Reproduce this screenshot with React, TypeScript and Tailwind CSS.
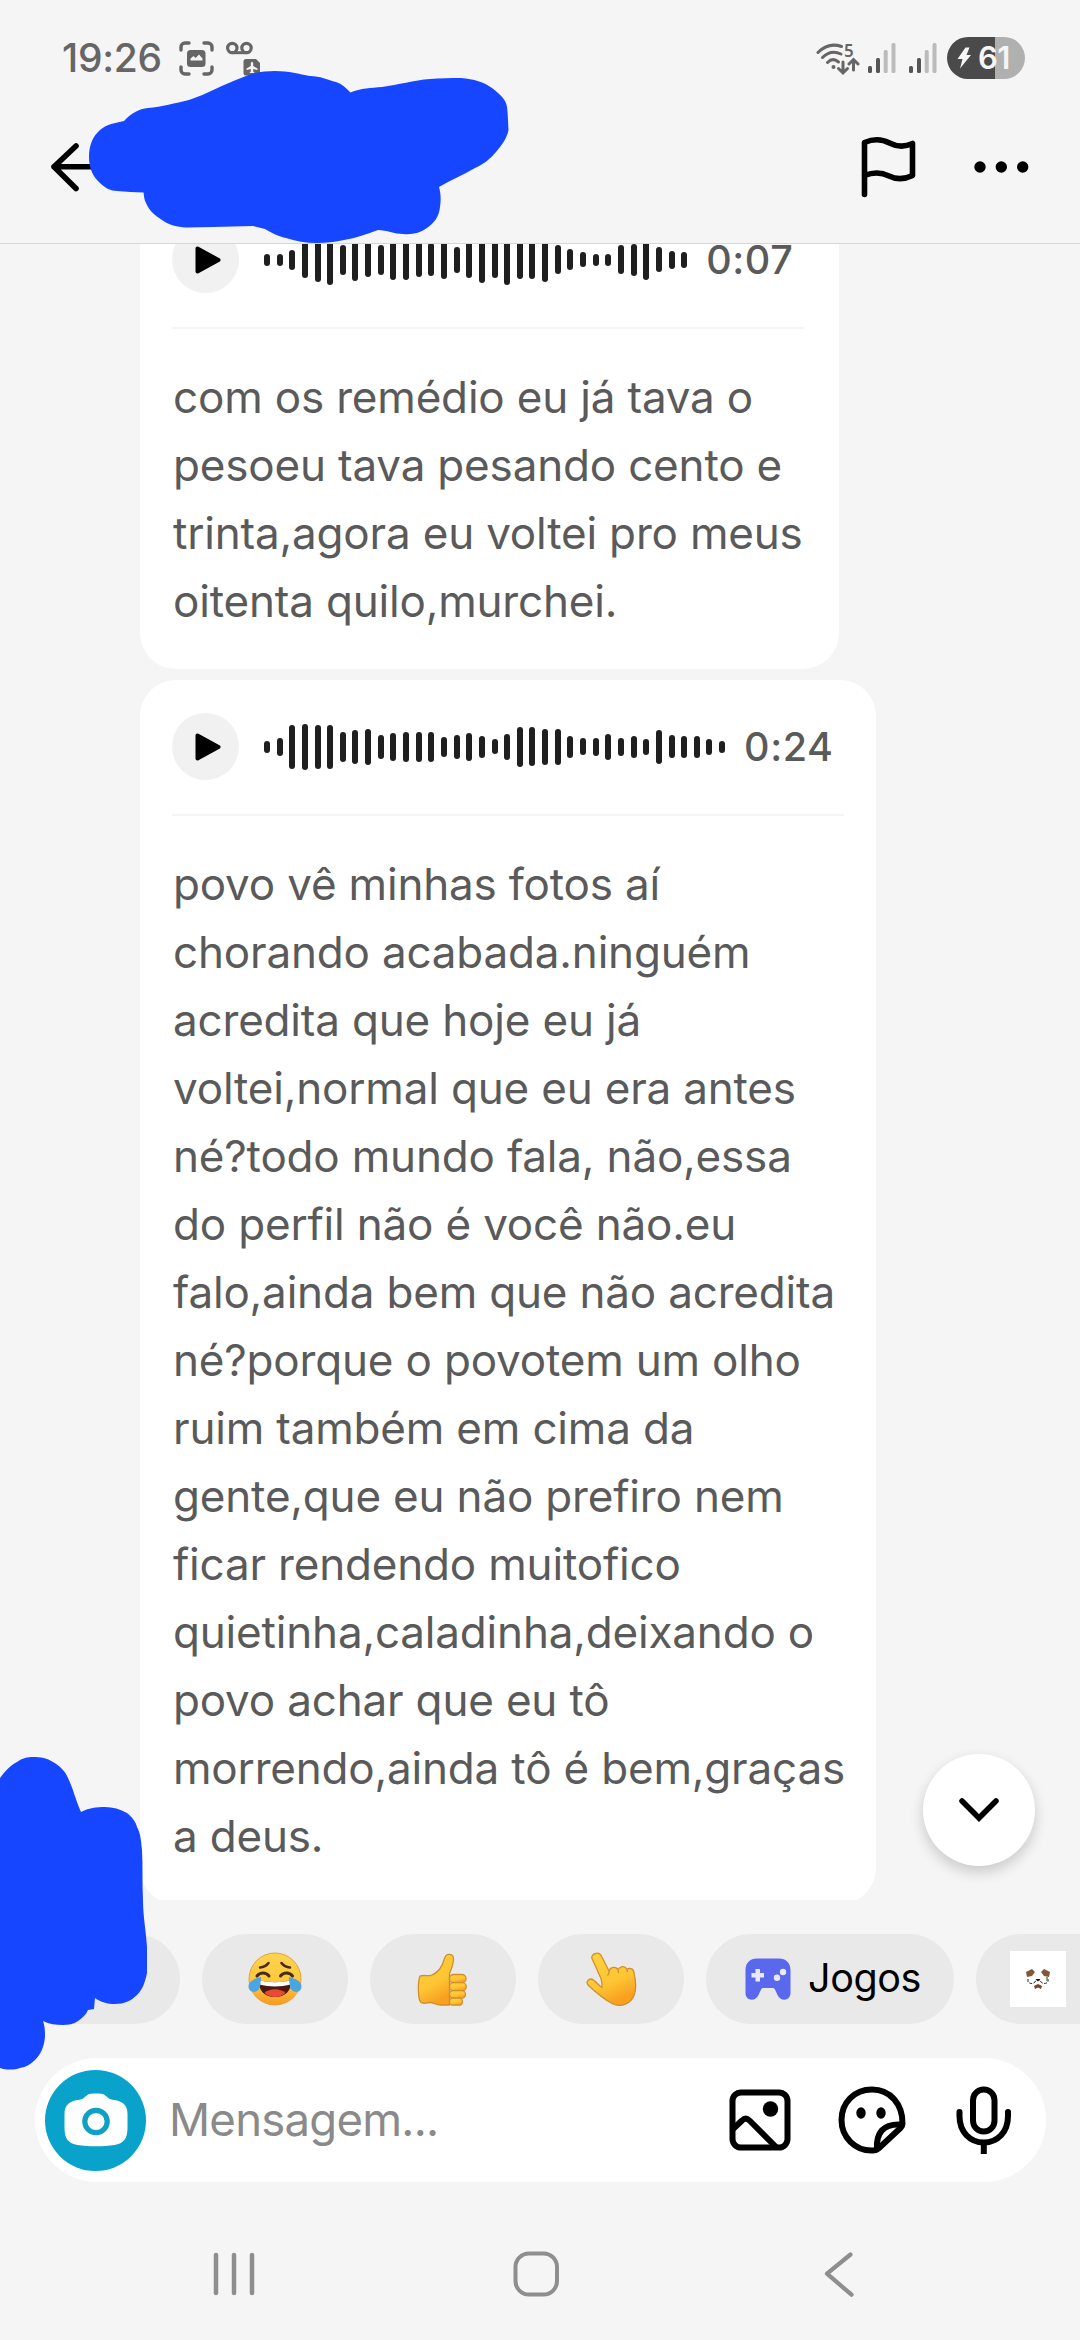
import React from 'react';

const firstWave = [
  12, 12, 20, 37, 45, 50, 30, 42, 35, 30, 40, 40, 35, 33, 39, 26, 37, 47, 37, 50, 38, 38, 45, 29, 21, 15, 12, 12, 29, 32,
  40, 25, 18, 16,
];

const secondWave = [
  12, 18, 44, 46, 44, 44, 30, 34, 36, 24, 28, 30, 30, 30, 20, 24, 28, 22, 15, 26, 40, 39, 36, 36, 22, 17, 18, 26, 18, 22,
  16, 34, 23, 22, 22, 16, 12,
];

const firstText = [
  'com os remédio eu já tava o',
  'pesoeu tava pesando cento e',
  'trinta,agora eu voltei pro meus',
  'oitenta quilo,murchei.',
];

const secondText = [
  'povo vê minhas fotos aí',
  'chorando acabada.ninguém',
  'acredita que hoje eu já',
  'voltei,normal que eu era antes',
  'né?todo mundo fala, não,essa',
  'do perfil não é você não.eu',
  'falo,ainda bem que não acredita',
  'né?porque o povotem um olho',
  'ruim também em cima da',
  'gente,que eu não prefiro nem',
  'ficar rendendo muitofico',
  'quietinha,caladinha,deixando o',
  'povo achar que eu tô',
  'morrendo,ainda tô é bem,graças',
  'a deus.',
];

function StatusBar() {
  return (
    <div className="flex h-[79px] items-end pl-[62px] pr-[55px]">
      <span className="h-[42px] w-[117px] text-[39px] font-medium leading-[42px] tracking-[-0.3px] text-[#666]">19:26</span>
      <svg className="mb-[3px] h-[35px] w-[35px]" viewBox="0 0 35 35" fill="none">
        <path
          d="M2 9V6a4 4 0 0 1 4-4h4M25 2h4a4 4 0 0 1 4 4v3M33 26v3a4 4 0 0 1-4 4h-4M10 33H6a4 4 0 0 1-4-4v-3"
          stroke="#666"
          strokeWidth="3.4"
          strokeLinecap="round"
        />
        <rect x="8" y="9" width="18.500" height="17" rx="3.500" fill="#666" />
        <path d="M11.500 19.500v-2l3-2.500 2 2 3.500-3.500 3.500 4v2z" fill="#f5f5f5" />
      </svg>
      <svg className="mb-[2px] ml-[12px] h-[36px] w-[36px]" viewBox="0 0 36 36" fill="none">
        <circle cx="6.300" cy="7" r="4.700" stroke="#666" strokeWidth="3.200" />
        <circle cx="20.500" cy="7" r="4.700" stroke="#666" strokeWidth="3.200" />
        <path d="M6.300 11.700h14.200" stroke="#666" strokeWidth="3" />
        <path d="M20 18h10l4 4v10a2.500 2.500 0 0 1-2.500 2.500h-11.500a2.500 2.500 0 0 1-2.500-2.500V20.500a2.500 2.500 0 0 1 2.500-2.500z" fill="#666" />
        <path d="M26 20.500l1.200 1.500v3l4.300 2.500v1.500l-4.300-1v2.500l1.500 1.500h-5.400l1.500-1.500V28l-4.300 1v-1.500l4.300-2.500v-3z" fill="#f5f5f5" />
      </svg>

      <div className="ml-auto flex items-end">
        <svg className="mb-[3px] h-[36px] w-[44px]" viewBox="0 0 44 36" fill="none">
          <g stroke="#666" strokeWidth="3" strokeLinecap="round">
            <path d="M2 12.500C9 5.500 17 3.500 25.500 6.500" />
            <path d="M6.500 17.500c5.500-5.500 12-6.500 18.500-3.500" />
            <path d="M11.500 22.500c3.500-3.500 7.500-3.500 11-.5" />
            <path d="M27 22v10M22.500 28.500l4.500 4.500 4.500-4.500M37.500 30V20M33 24l4.500-4.500 4.500 4.500" />
          </g>
          <circle cx="17.500" cy="27" r="2" fill="#666" />
          <text x="28" y="16.500" fontFamily="Noto Sans" fontSize="17" fontWeight="600" fill="#666">5</text>
        </svg>
        {[0, 1].map((i) => (
          <svg key={i} className="mb-[6px] ml-[8px] mr-[5px] h-[30px] w-[28px]" viewBox="0 0 28 30">
            <rect x="0" y="23" width="4" height="7" rx="1.500" fill="#555" />
            <rect x="8" y="15" width="4" height="15" rx="1.500" fill="#555" />
            <rect x="15.700" y="7" width="4" height="23" rx="1.500" fill="#bbb" />
            <rect x="23.500" y="0" width="4" height="30" rx="1.500" fill="#bbb" />
          </svg>
        ))}
        <div className="ml-[5px] flex h-[42px] w-[78px] items-center rounded-full bg-linear-to-r from-[#4a4a4a] from-[61%] to-[#b0b0b0] to-[61%] pl-[9px] text-[31px] font-semibold text-[#f5f5f5]">
          <svg className="h-[22px] w-[16px]" viewBox="0 0 16 22" fill="#f5f5f5">
            <path d="M9.500.5h4L10.500 8H15L4 21.500 6.500 12H1.500z" />
          </svg>
          <span className="ml-[6px] tracking-[-0.5px]">61</span>
        </div>
      </div>
    </div>
  );
}

function TopBar() {
  return (
    <header className="h-[244px] shrink-0 border-b border-[#d6d6d8]">
      <StatusBar />
      <div className="flex h-[164px] items-start justify-between pl-[50px] pr-[51px] pt-[56px]">
        <svg className="mt-[7px] h-[50px] w-[56px]" viewBox="0 0 56 50" fill="none" stroke="#000" strokeWidth="5.600" strokeLinecap="round" strokeLinejoin="round">
          <path d="M26 4 4 24.700 26 46.500M4 24.700h46" />
        </svg>
        <div className="flex items-start">
          <svg className="h-[66px] w-[58px]" viewBox="0 0 58 66" fill="none" stroke="#000" strokeWidth="5.600" strokeLinecap="round" strokeLinejoin="round">
            <path d="M5.500 59.500V7.500c9-3.800 16.500-4 25 .5 8 4.200 15 4.200 23 .5v32c-8.500 4.200-15.500 4.500-23.500.5-8-4-15.500-4-24.500-.5" />
          </svg>
          <svg className="ml-[57px] mt-[26px] h-[12px] w-[55px]" viewBox="0 0 55 12">
            <circle cx="6" cy="6" r="5.700" />
            <circle cx="27.300" cy="6" r="5.700" />
            <circle cx="48.700" cy="6" r="5.700" />
          </svg>
        </div>
      </div>
    </header>
  );
}

type VoiceProps = {
  bars: number[];
  time: string;
  lines: string[];
  className: string;
};

function VoiceMessage({ bars, time, lines, className }: VoiceProps) {
  return (
    <div className={'rounded-[36px] bg-white pb-[34px] pl-[32px] pt-[33px] ' + className}>
      <div className="flex h-[67px] items-center">
        <div className="flex size-[67px] items-center justify-center rounded-full bg-[#f2f1f2]">
          <svg className="ml-[4px] h-[28px] w-[26px]" viewBox="0 0 26 28">
            <path d="M2.500 2.500v23L23.500 14z" fill="#000" stroke="#000" strokeWidth="4" strokeLinejoin="round" />
          </svg>
        </div>
        <div className="ml-[25px] flex items-center gap-[6.650px]">
          {bars.map((height, i) => (
            <div key={i} className="w-[6px] rounded-full bg-[#1f1f1f]" style={{ height }} />
          ))}
        </div>
        <span className="ml-[19px] text-[39.500px] font-medium leading-[30px] tracking-[0.600px] text-[#5a5a5a]">{time}</span>
      </div>
      <div className="mt-[34px] h-[2px] bg-[#f5f5f5]" />
      <div className="ml-px mt-[34px] text-[44px] leading-[68px] tracking-[-0.180px] text-[#5a5a5a]">
        {lines.map((line) => (
          <p key={line} className="whitespace-nowrap">{line}</p>
        ))}
      </div>
    </div>
  );
}

function Laughing() {
  return (
    <svg className="size-[56px]" viewBox="0 0 56 56">
      <defs>
        <linearGradient id="face" x1="0" y1="0" x2="0" y2="1">
          <stop offset="0" stopColor="#fdd44f" />
          <stop offset="0.600" stopColor="#fcc63a" />
          <stop offset="1" stopColor="#f79a22" />
        </linearGradient>
      </defs>
      <circle cx="28" cy="28" r="26" fill="url(#face)" stroke="#e5a03a" strokeWidth="1" />
      <g fill="none" stroke="#4a2a12" strokeWidth="2.600" strokeLinecap="round">
        <path d="M13 16.500c4-.3 6.500-1.800 8.500-4.500M43 16.500c-4-.3-6.500-1.800-8.500-4.500" />
        <path d="M10 25c3-4 9-4 12 0M33.500 25c3-4 9-4 12 0" strokeWidth="3" />
      </g>
      <path d="M11.500 29c10 3 23 3 33 0 0 11-6.500 17-16.500 17s-16.500-6-16.500-17z" fill="#4a1a10" />
      <path d="M11.500 29c10 3 23 3 33 0l-.8 4.500c-10 2.500-21.400 2.500-31.400 0z" fill="#fff" />
      <path d="M17.500 42c5-5 16-5 21 0-5.500 5.200-15.500 5.200-21 0z" fill="#ea4a35" />
      <path d="M14 26c-5 1-12.500 4-12.500 9.500 0 7 10 7.500 11.500 0 .6-3.500 1-6.500 1-9.500zM42 26c5 1 12.500 4 12.500 9.500 0 7-10 7.500-11.500 0-.6-3.500-1-6.500-1-9.500z" fill="#4aa5e2" />
    </svg>
  );
}

function ThumbsUp() {
  return (
    <svg className="size-[56px]" viewBox="0 0 56 56">
      <defs>
        <linearGradient id="hand" x1="0" y1="0" x2="0.400" y2="1">
          <stop offset="0" stopColor="#fdd13e" />
          <stop offset="0.650" stopColor="#fdc534" />
          <stop offset="1" stopColor="#f9a01f" />
        </linearGradient>
      </defs>
      <g fill="url(#hand)" stroke="#cf8f2e" strokeWidth="1.300" strokeLinejoin="round">
        <path d="M5 25c3-1.200 7.500 0 11-.5 6.500-2.500 11.500-9 13.500-17 1.500-6 9.500-5.500 9 1-.4 5-2 9.500-4 14v31.500h-9c-5 0-7-2.800-11-2.500-3 .3-6.500 2-9-.5-2.500-4-3-19-.5-26z" />
        <rect x="34.500" y="23.500" width="16.500" height="8.200" rx="4" />
        <rect x="34.500" y="31.700" width="16.800" height="8" rx="4" />
        <rect x="34.500" y="39.700" width="16" height="7.500" rx="3.700" />
        <rect x="34.500" y="47.200" width="13" height="7" rx="3.500" />
      </g>
    </svg>
  );
}

function PointingHand() {
  return (
    <svg className="size-[56px]" viewBox="0 0 56 56">
      <path
        d="M12.500 2.500c3-1.200 5.500.8 6.500 3.500l7 14c1.500-4 6.500-5 9-1.500 2-3.500 7-4 9-.3 3-1.800 7-.2 7 4 1.800 7 2.500 14 .5 21C48 53 38 57 29 52.500 21 48.500 12 40.500 5.500 34.500 2 31 6 26 10.500 29c3.500 2.500 5.500 6 8.500 7.500.3-3-.2-6-1-9L9 7.500c-.8-2 1-4.500 3.500-5z"
        fill="url(#hand)"
        stroke="#cf8f2e"
        strokeWidth="1.300"
        strokeLinejoin="round"
      />
      <path d="M26 20c.3 2-.3 3.500-1.500 4.500M35 19l.5 3M44 18.500l.3 2.500" fill="none" stroke="#cf8f2e" strokeWidth="1.300" />
    </svg>
  );
}

function Chips() {
  return (
    <div className="flex h-[158px] shrink-0 gap-[22px] overflow-hidden pl-[34px] pt-[34px]">
      <div className="h-[90px] w-[146px] shrink-0 rounded-full bg-[#e9e9ea]" />
      {[Laughing, ThumbsUp, PointingHand].map((Emoji, i) => (
        <div key={i} className="flex h-[90px] w-[146px] shrink-0 items-center justify-center rounded-full bg-[#e9e9ea]">
          <Emoji />
        </div>
      ))}
      <div className="flex h-[90px] w-[248px] shrink-0 items-center rounded-full bg-[#e9e9ea] pl-[39px]">
        <svg className="h-[42px] w-[46px]" viewBox="0 0 46 42">
          <path d="M12 .5h22C41 .5 45.500 5 45.500 12v23c0 8-10 9-13 2l-2.500-5.500c-.7-1-1.300-1.500-2.500-1.500h-9c-1.200 0-1.800.5-2.500 1.500L13.500 37C10.500 44 .5 43 .5 35V12C.5 5 5 .5 12 .5z" fill="#5a68ee" />
          <path d="M10.500 11h4.500v4h4v4.500h-4v4h-4.500v-4h-4V15h4z" fill="#e9e9ff" />
          <circle cx="38" cy="14" r="3.200" fill="#e9e9ff" />
          <circle cx="32" cy="19.700" r="3.200" fill="#e9e9ff" />
        </svg>
        <span className="ml-[17px] text-[39.500px] tracking-[-0.4px] text-black">Jogos</span>
      </div>
      <div className="flex h-[90px] w-[248px] shrink-0 items-center rounded-full bg-[#e9e9ea] pl-[34px]">
        <svg className="size-[56px] bg-white" viewBox="0 0 56 56">
          <path d="M16 21l6-3 3 3-3 4-5 1zM40 21l-6-3-3 3 3 4 5 1z" fill="#7d5a3a" />
          <path d="M18 28v3c2 2 5 2 7 0l1-2h4l1 2c2 2 5 2 7 0v-3" fill="none" stroke="#222" strokeWidth="1" strokeDasharray="3 1.500" />
          <path d="M25.500 28h5L28 30.500z" fill="#111" />
          <path d="M24 35l4-2 4 2-1 3-3-1.500-3 1.500z" fill="#7a4030" />
          <path d="M37 26v4" stroke="#5a8a4a" strokeWidth="1.500" />
        </svg>
      </div>
    </div>
  );
}

function Composer() {
  return (
    <div className="ml-[35px] flex h-[124px] w-[1011px] shrink-0 items-center rounded-full bg-white pl-[10px] pr-[34px]">
      <div className="flex size-[101px] items-center justify-center rounded-full bg-[#08a2cb]">
        <svg className="h-[54px] w-[64px]" viewBox="0 0 64 54">
          <path d="M24 1.500c2-1.300 14-1.300 16 0l5 4c1 .8 2.200 1 3.500 1.200C59 8 63.500 12 63.500 21v14c0 11-4 15.500-13 17-11 1.800-26 1.800-37 0C4.500 50.500.5 46 .5 35V21C.5 12 5 8 15.500 6.700c1.300-.2 2.500-.4 3.500-1.200z" fill="#fff" />
          <circle cx="32" cy="28.500" r="11.200" fill="#fff" stroke="#0fa0c4" strokeWidth="5.200" />
        </svg>
      </div>
      <span className="ml-[23px] text-[45.500px] tracking-[-0.750px] text-[#8a8a8a]">Mensagem...</span>
      <div className="ml-auto flex items-center">
        <svg className="size-[62px]" viewBox="0 0 62 62" fill="none" stroke="#000" strokeWidth="6">
          <rect x="3.500" y="3.500" width="55" height="55" rx="8.500" />
          <path d="M4 40l9-8.500c2.500-2.500 5-2.500 7.500 0L47 58" />
          <circle cx="41.500" cy="20" r="7.700" fill="#000" stroke="none" />
        </svg>
        <svg className="ml-[47px] size-[68px]" viewBox="0 0 68 68" fill="none" stroke="#000" strokeWidth="6" strokeLinejoin="round">
          <path d="M64.500 38C65 18 52 3.500 34 3.500S3.500 17 3.500 34s13.500 31 31 30.500c3 0 4.500-.5 6-2L62.500 42c1.300-1.200 2-2.500 2-4z" />
          <path d="M39 63c-1-16 6-25.500 24-24.500" />
          <ellipse cx="23" cy="27" rx="4.700" ry="5.700" fill="#000" stroke="none" />
          <ellipse cx="43" cy="27" rx="4.700" ry="5.700" fill="#000" stroke="none" />
        </svg>
        <svg className="ml-[50px] h-[68px] w-[56px]" viewBox="0 0 56 68" fill="none" stroke="#000" strokeWidth="6">
          <rect x="17" y="3.500" width="21.500" height="42" rx="10.700" />
          <path d="M3.500 26v4c0 16 10.500 26.500 24.300 26.500S52 46 52 30v-4" strokeLinecap="round" />
          <path d="M27.800 56v12" />
        </svg>
      </div>
    </div>
  );
}

function AndroidNav() {
  return (
    <nav className="flex h-[158px] shrink-0 pl-[212px] pt-[69px]">
      <svg className="h-[46px] w-[44px]" viewBox="0 0 44 46" stroke="#8e8e8e" strokeWidth="4.500" strokeLinecap="round">
        <path d="M4 4v38M22 4v38M40 4v38" />
      </svg>
      <svg className="ml-[257px] h-[46px] w-[46px]" viewBox="0 0 46 46" fill="none" stroke="#8e8e8e" strokeWidth="4">
        <rect x="2.500" y="2.500" width="41.500" height="41" rx="13.500" />
      </svg>
      <svg className="ml-[265px] h-[46px] w-[32px]" viewBox="0 0 32 46" fill="none" stroke="#8e8e8e" strokeWidth="4.200" strokeLinecap="round" strokeLinejoin="round">
        <path d="M26.500 3.500 3 22.700l24.500 21" />
      </svg>
    </nav>
  );
}

export default function App() {
  return (
    <div className="relative flex h-[2340px] w-[1080px] flex-col overflow-hidden bg-[#f5f5f6] font-['Inter',sans-serif]">
      <TopBar />

      {/* Conversación */}
      <main className="h-[1656px] shrink-0 overflow-hidden pl-[140px]">
        <div className="-mt-[51px] flex flex-col items-start gap-[11px]">
          <VoiceMessage bars={firstWave} time="0:07" lines={firstText} className="w-[699px] pr-[35px]" />
          <VoiceMessage bars={secondWave} time="0:24" lines={secondText} className="w-[736px] pr-[32px]" />
        </div>
      </main>

      <Chips />
      <Composer />
      <AndroidNav />

      {/* Botón para bajar */}
      <button className="absolute left-[923px] top-[1754px] flex size-[112px] items-center justify-center rounded-full bg-white shadow-[0_6px_14px_rgba(0,0,0,0.180)]">
        <svg className="h-[24px] w-[42px]" viewBox="0 0 42 24" fill="none" stroke="#000" strokeWidth="5.500" strokeLinecap="round">
          <path d="M4 3l17 17L38 3" />
        </svg>
      </button>

      {/* Trazos azules */}
      <svg className="absolute left-[80px] top-[64px] h-[184px] w-[440px]" viewBox="80 64 440 184" fill="#1646ff">
        <path d="M89 157C89 145 93 136 100 130 107 124 115 123 124 121 131 113 139 109 148 108 162 107 175 103 189 100 207 94 224 84 241 78 252 73 263 71 275 71 289 71 299 74 310 76 320 76 328 80 336 82 342 84 346 88 350.500 92.500 361 88 371 88 382 87 398 85 414 80 430 79 440 78 451 78 461 78 474 79 484 82 492 88 501 95 506 100 507 107 508 114 508 122 508.500 130 507 138 502 145 496 152 490 159 484 164 475 168 463 175 451 180 439 187 441 194 441 200 440 207 439 217 434 223 427 228 420 233 412 235 403 234 394 234 387 230 378 230 367 234 356 238 344 240 336 242 326 243 317 243 306 243 295 241 286 238 277 236 272 233 265 229L253 226C240 226 226 227 213.500 227L186 227.500C177 227 169 225 162 220 154 215 149 210 146 203 144 199 144 196 143.600 192.500 135 192 126 192 117 191 111 191 105 188 100 183 93 177 89 168 89 157z" />
      </svg>
      <svg className="absolute left-0 top-[1750px] h-[330px] w-[160px]" viewBox="0 1750 160 330" fill="#1646ff">
        <path d="M0 1778C5 1771 11 1765 17 1762 22 1758 28 1757 33 1757 41 1757 47 1758 53 1762 60 1766 65 1771 68 1778 73 1788 76 1801 81 1812 88 1808 97 1807 105 1807 113 1807 120 1809 127 1813 132 1817 136 1822 137 1827 141 1834 141 1842 142 1850 143 1867 142 1883 143 1900 143 1916 146 1931 147 1947L147 1973C145 1982 143 1989 137 1995 131 2001 124 2004 115 2004 107 2004 101 2002 95 1998L94 2009 88 2010C86 2015 82 2018 78 2021 74 2024 68 2025 63 2025 56 2025 49 2024 43 2021 45 2026 45 2032 45 2037 44 2047 41 2054 35 2060 31 2064 26 2067 20 2068 14 2070 6 2070 0 2068z" />
      </svg>
    </div>
  );
}
